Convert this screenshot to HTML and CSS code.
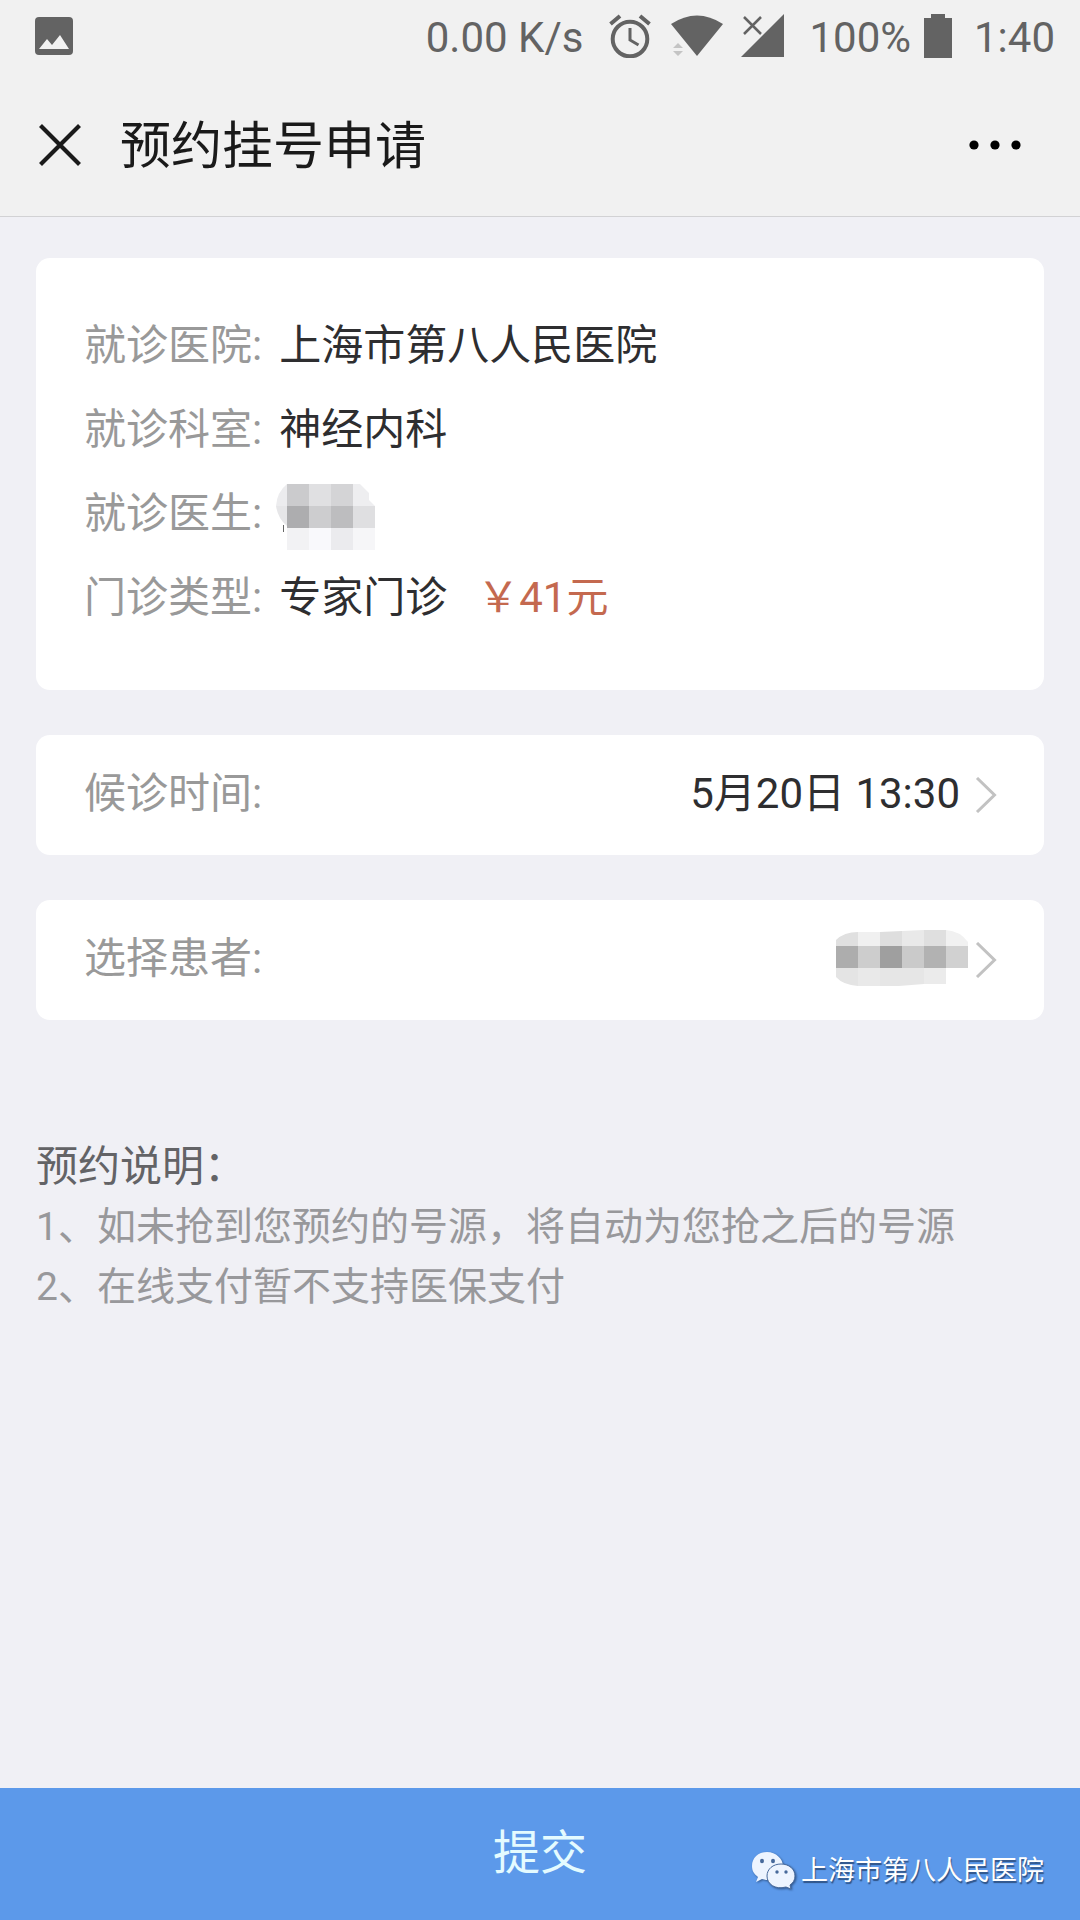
FILE: index.html
```html
<!DOCTYPE html>
<html lang="zh-CN">
<head>
<meta charset="utf-8">
<meta name="viewport" content="width=device-width, initial-scale=1">
<title>预约挂号申请</title>
<link rel="stylesheet" href="styles.css">
</head>
<body>
<div class="status-bar">
  <svg class="status-photo" width="38" height="40" viewBox="0 0 38 40" aria-hidden="true"><rect y="1" width="38" height="38" rx="4"/><path class="cutout" d="M4 33l8-10 5 6 8-10 9 14z"/></svg>
  <span class="status-speed">0.00 K/s</span>
  <svg class="status-alarm" width="42" height="44" viewBox="0 0 42 44" aria-hidden="true"><circle class="stroke" cx="21" cy="25" r="17.3" stroke-width="4"/><path class="stroke" stroke-width="3" d="M21 14v12l8.500 5"/><path class="stroke" stroke-width="4" d="M1.500 10L11 2M31 2l9.500 8"/></svg>
  <svg class="status-wifi" width="52" height="44" viewBox="0 0 52 44" aria-hidden="true"><path d="M0 10Q26-7 52 10L26 42z"/><path class="faint" d="M2 34l5-5 5 5zM2 37h10l-5 5z"/></svg>
  <svg class="status-signal" width="43" height="44" viewBox="0 0 43 44" aria-hidden="true"><path d="M43 0v43H0z"/><path class="stroke" stroke-width="2.500" d="M3 3l17 17M20 3L3 20"/></svg>
  <span class="status-level">100%</span>
  <svg class="status-battery" width="28" height="44" viewBox="0 0 28 44" aria-hidden="true"><path d="M7 0h14v4h7v40H0V4h7z"/></svg>
  <span>1:40</span>
</div>
<header class="nav-bar">
  <button class="icon-button" type="button" aria-label="关闭"><svg width="42" height="42" viewBox="0 0 42 42"><path d="M1.500 1.500l39 39M40.500 1.500l-39 39" stroke="#1a1a1a" stroke-width="4.200"/></svg></button>
  <h1 class="nav-title">预约挂号申请</h1>
  <button class="icon-button" type="button" aria-label="更多"><svg width="52" height="10" viewBox="0 0 52 10"><circle cx="5" cy="5" r="4.600"/><circle cx="26" cy="5" r="4.600"/><circle cx="47" cy="5" r="4.600"/></svg></button>
</header>
<main class="content">
  <dl class="card details">
    <div class="detail-row"><dt>就诊医院:</dt><dd>上海市第八人民医院</dd></div>
    <div class="detail-row"><dt>就诊科室:</dt><dd>神经内科</dd></div>
    <div class="detail-row"><dt>就诊医生:</dt><dd>
      <svg class="doctor-mask" width="100" height="68" viewBox="0 0 100 68" role="img" aria-label="已隐藏">
        <path fill="#ececee" d="M11 2Q1 10 0 24h11z"/><path fill="#e6e6e8" d="M0 24h11v20Q2 37 0 24z"/>
        <path fill="#cbcbcd" d="M11 2h22v22H11z"/><path fill="#e0e0e2" d="M33 2h22v22H33z"/><path fill="#d4d4d6" d="M55 2h22v22H55z"/><path fill="#eeeef0" d="M77 2h7l9 9v7l6 6H77z"/>
        <path fill="#adadaf" d="M11 24h22v22H11z"/><path fill="#cdcdcf" d="M33 24h22v22H33z"/><path fill="#bdbdbf" d="M55 24h22v22H55z"/><path fill="#dfdfe1" d="M77 24h22v22H77z"/>
        <path fill="#f2f2f4" d="M11 46h22v22H11z"/><path fill="#f9f9fc" d="M33 46h22v22H33z"/><path fill="#ebebee" d="M55 46h22v22H55z"/><path fill="#f6f6f8" d="M77 46h22v22H77z"/>
        <path fill="#666" d="M7 43h1v7H7z"/>
      </svg></dd></div>
    <div class="detail-row"><dt>门诊类型:</dt><dd>专家门诊<span class="price">￥41元</span></dd></div>
  </dl>
  <button class="card picker" type="button">
    <span class="picker-label">候诊时间:</span>
    <span class="picker-value">5月20日 13:30</span>
    <svg class="chevron" width="22" height="36" viewBox="0 0 22 36" aria-hidden="true"><path d="M2 1l17.500 17L2 35"/></svg>
  </button>
  <button class="card picker" type="button">
    <span class="picker-label">选择患者:</span>
    <svg class="patient-mask" width="132" height="60" viewBox="0 0 132 60" role="img" aria-label="已隐藏">
      <path fill="#e0e0e0" d="M0 16V10Q8 2 22 2v14z"/><path fill="#f0f0f0" d="M22 2h22v14H22z"/><path fill="#dedede" d="M44 2l22-1v15H44z"/><path fill="#e9e9e9" d="M66 1l22-1v16H66z"/><path fill="#dfdfdf" d="M88 0h22v16H88z"/><path fill="#f1f1f1" d="M110 0q14 1 22 12v4h-22z"/>
      <path fill="#adadad" d="M0 16h22v22H0z"/><path fill="#cdcdcd" d="M22 16h22v22H22z"/><path fill="#9f9f9f" d="M44 16h22v22H44z"/><path fill="#cacaca" d="M66 16h22v22H66z"/><path fill="#b2b2b2" d="M88 16h22v22H88z"/><path fill="#d1d1d1" d="M110 16h22v22h-22z"/>
      <path fill="#e4e4e4" d="M0 38h22v18Q7 55 0 47z"/><path fill="#e9e9e9" d="M22 38h22v18H22z"/><path fill="#e6e6e6" d="M44 38h44v16l-25 2H44z"/><path fill="#ebebeb" d="M88 38h22v16H88z"/>
    </svg>
    <svg class="chevron" width="22" height="36" viewBox="0 0 22 36" aria-hidden="true"><path d="M2 1l17.500 17L2 35"/></svg>
  </button>
  <section class="notes">
    <h2>预约说明：</h2>
    <p>1、如未抢到您预约的号源，将自动为您抢之后的号源</p>
    <p>2、在线支付暂不支持医保支付</p>
  </section>
</main>
<footer class="footer">
  <button class="submit" type="button">提交</button>
  <div class="watermark">
    <svg width="44" height="38" viewBox="0 0 44 38" aria-hidden="true"><path d="M15 1C6 1 0 7 0 15c0 5 2 8 6 11l-2 5 6-3c3 1 5 1 8 1 8-1 13-7 13-14S24 1 15 1z"/><path class="front" d="M29 13c8 0 14 5 14 12 0 4-2 7-5 9l1 4-5-2c-11 3-19-3-19-11 0-7 6-12 14-12z"/><g class="eyes"><ellipse cx="10" cy="10" rx="2" ry="2.300"/><ellipse cx="21" cy="10" rx="2" ry="2.300"/><circle cx="25" cy="21" r="1.700"/><circle cx="34" cy="21" r="1.700"/></g></svg>
    <span>上海市第八人民医院</span>
  </div>
</footer>
</body>
</html>
```
FILE: styles.css
```css
* {
  box-sizing: border-box;
}

body {
  display: flex;
  flex-direction: column;
  min-height: 100vh;
  margin: 0;
  background: #f0f0f5;
  color: #2e2e30;
  font-family: Roboto, "Noto Sans CJK SC", sans-serif;
  font-size: 42px;
}

button {
  margin: 0;
  padding: 0;
  border: 0;
  background: none;
  color: inherit;
  font: inherit;
  cursor: pointer;
}

svg {
  display: block;
  flex: none;
}

/* Device status bar */
.status-bar {
  display: flex;
  align-items: center;
  height: 72px;
  padding: 0 25px 0 35px;
  background: #f1f1f1;
  color: #636363;
  fill: #636363;
  line-height: 72px;
  white-space: nowrap;
}

.status-bar span {
  padding-top: 4px;
}

.status-bar .stroke {
  fill: none;
  stroke: #636363;
}

.status-bar .cutout {
  fill: #f1f1f1;
}

.status-bar .faint {
  fill: #c4c4c4;
}

.status-speed {
  margin-left: auto;
}

.status-alarm {
  margin-left: 26px;
}

.status-wifi {
  margin-left: 20px;
}

.status-signal {
  margin-left: 18px;
}

.status-level {
  margin-left: 25px;
}

.status-battery {
  margin: 0 22px 0 13px;
}

/* Page title bar */
.nav-bar {
  display: flex;
  align-items: center;
  height: 145px;
  padding: 2px 59px 0 39px;
  border-bottom: 1px solid #d2d2d4;
  background: #f1f1f1;
}

.nav-title {
  flex: 1;
  margin: 0 0 0 39px;
  padding-top: 4px;
  color: #1a1a1a;
  font-size: 51px;
  font-weight: 400;
  line-height: 72px;
}

.content {
  display: flex;
  flex: 1;
  flex-direction: column;
  gap: 45px;
  padding: 41px 36px 45px;
}

.card {
  margin: 0;
  border-radius: 14px;
  background: #fff;
}

.details {
  padding: 46px 48px 50px;
}

.detail-row {
  display: flex;
  gap: 17px;
  line-height: 84px;
}

.detail-row dt,
.picker-label {
  color: #999;
}

.detail-row dd {
  display: flex;
  align-items: center;
  margin: 0;
}

.doctor-mask {
  margin: 4px 0 0 -3px;
}

.price {
  margin-left: 30px;
  color: #c4694f;
}

.picker {
  display: flex;
  align-items: center;
  height: 120px;
  padding: 0 47px 0 48px;
  text-align: left;
}

.picker-label {
  flex: 1;
}

.picker-label,
.picker-value {
  padding-bottom: 12px;
}

.chevron {
  margin-left: 15px;
  fill: none;
  stroke: #c2c2c2;
  stroke-width: 3;
}

.patient-mask + .chevron {
  margin-left: 7px;
}

.notes {
  margin-top: 72px;
  color: #98989b;
  font-size: 39px;
  line-height: 60px;
}

.notes h2,
.notes p {
  margin: 0;
}

.notes h2 {
  color: #636366;
  font-size: 42px;
  font-weight: 400;
}

/* Submit bar with the account mark over its corner */
.footer {
  position: relative;
}

.submit {
  display: block;
  width: 100%;
  height: 132px;
  padding-bottom: 12px;
  background: #5c99ea;
  color: #e4fbff;
  font-size: 47px;
}

.watermark {
  position: absolute;
  right: 36px;
  bottom: 30px;
  display: flex;
  align-items: center;
  gap: 5px;
  color: #fff;
  font-size: 27px;
  line-height: 38px;
  text-shadow: 1px 2px 1px #2f5488;
  pointer-events: none;
}

.watermark svg {
  fill: #edf4ff;
  filter: drop-shadow(1px 1px 1px #2f5488);
}

.watermark span {
  padding-top: 2px;
}

.watermark .front {
  stroke: #47699b;
  stroke-width: 1;
}

.watermark .eyes {
  fill: #47699b;
}
```
